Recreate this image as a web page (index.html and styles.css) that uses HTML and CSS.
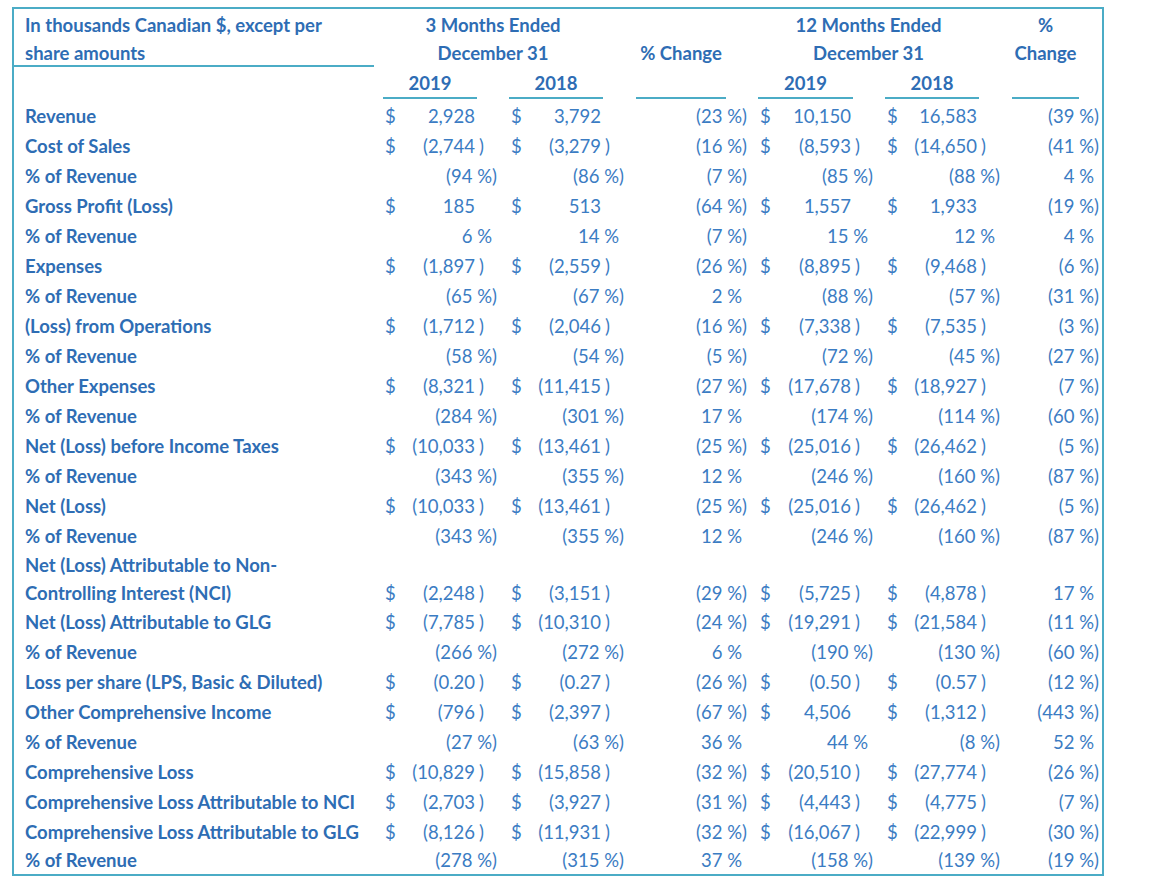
FILE: index.html
```html
<!DOCTYPE html>
<html>
<head>
<meta charset="utf-8">
<link rel="stylesheet" href="styles.css">
</head>
<body>
<div class="frame">
  <div class="head grid">
    <div class="h-label">In thousands Canadian $, except per<br>share amounts</div>
    <div class="h-grp g1">3 Months Ended<br>December 31</div>
    <div class="h-chg1">% Change</div>
    <div class="h-grp g2">12 Months Ended<br>December 31</div>
    <div class="h-chg2">%<br>Change</div>
    <div class="yr a1">2019</div>
    <div class="yr a2">2018</div>
    <div class="yr c6"></div>
    <div class="yr a3">2019</div>
    <div class="yr a4">2018</div>
    <div class="yr c12"></div>
  </div>
  <div class="body">
    <div class="row grid">
      <div class="lbl">Revenue</div>
      <div class="amt a1"><span>$</span><span>2,928</span></div>
      <div class="amt a2"><span>$</span><span>3,792</span></div>
      <div class="pct qc1">(23 %)</div>
      <div class="amt a3"><span>$</span><span>10,150</span></div>
      <div class="amt a4"><span>$</span><span>16,583</span></div>
      <div class="pct qc2">(39 %)</div>
    </div>
    <div class="row grid">
      <div class="lbl">Cost of Sales</div>
      <div class="amt a1"><span>$</span><span>(2,744</span></div><div class="rp r1">)</div>
      <div class="amt a2"><span>$</span><span>(3,279</span></div><div class="rp r2">)</div>
      <div class="pct qc1">(16 %)</div>
      <div class="amt a3"><span>$</span><span>(8,593</span></div><div class="rp r3">)</div>
      <div class="amt a4"><span>$</span><span>(14,650</span></div><div class="rp r4">)</div>
      <div class="pct qc2">(41 %)</div>
    </div>
    <div class="row grid">
      <div class="lbl">% of Revenue</div>
      <div class="pct q1">(94 %)</div>
      <div class="pct q2">(86 %)</div>
      <div class="pct qc1">(7 %)</div>
      <div class="pct q3">(85 %)</div>
      <div class="pct q4">(88 %)</div>
      <div class="pct qc2">4 %<span class="hp">)</span></div>
    </div>
    <div class="row grid">
      <div class="lbl">Gross Profit (Loss)</div>
      <div class="amt a1"><span>$</span><span>185</span></div>
      <div class="amt a2"><span>$</span><span>513</span></div>
      <div class="pct qc1">(64 %)</div>
      <div class="amt a3"><span>$</span><span>1,557</span></div>
      <div class="amt a4"><span>$</span><span>1,933</span></div>
      <div class="pct qc2">(19 %)</div>
    </div>
    <div class="row grid">
      <div class="lbl">% of Revenue</div>
      <div class="pct q1">6 %<span class="hp">)</span></div>
      <div class="pct q2">14 %<span class="hp">)</span></div>
      <div class="pct qc1">(7 %)</div>
      <div class="pct q3">15 %<span class="hp">)</span></div>
      <div class="pct q4">12 %<span class="hp">)</span></div>
      <div class="pct qc2">4 %<span class="hp">)</span></div>
    </div>
    <div class="row grid">
      <div class="lbl">Expenses</div>
      <div class="amt a1"><span>$</span><span>(1,897</span></div><div class="rp r1">)</div>
      <div class="amt a2"><span>$</span><span>(2,559</span></div><div class="rp r2">)</div>
      <div class="pct qc1">(26 %)</div>
      <div class="amt a3"><span>$</span><span>(8,895</span></div><div class="rp r3">)</div>
      <div class="amt a4"><span>$</span><span>(9,468</span></div><div class="rp r4">)</div>
      <div class="pct qc2">(6 %)</div>
    </div>
    <div class="row grid">
      <div class="lbl">% of Revenue</div>
      <div class="pct q1">(65 %)</div>
      <div class="pct q2">(67 %)</div>
      <div class="pct qc1">2 %<span class="hp">)</span></div>
      <div class="pct q3">(88 %)</div>
      <div class="pct q4">(57 %)</div>
      <div class="pct qc2">(31 %)</div>
    </div>
    <div class="row grid">
      <div class="lbl">(Loss) from Operations</div>
      <div class="amt a1"><span>$</span><span>(1,712</span></div><div class="rp r1">)</div>
      <div class="amt a2"><span>$</span><span>(2,046</span></div><div class="rp r2">)</div>
      <div class="pct qc1">(16 %)</div>
      <div class="amt a3"><span>$</span><span>(7,338</span></div><div class="rp r3">)</div>
      <div class="amt a4"><span>$</span><span>(7,535</span></div><div class="rp r4">)</div>
      <div class="pct qc2">(3 %)</div>
    </div>
    <div class="row grid">
      <div class="lbl">% of Revenue</div>
      <div class="pct q1">(58 %)</div>
      <div class="pct q2">(54 %)</div>
      <div class="pct qc1">(5 %)</div>
      <div class="pct q3">(72 %)</div>
      <div class="pct q4">(45 %)</div>
      <div class="pct qc2">(27 %)</div>
    </div>
    <div class="row grid">
      <div class="lbl">Other Expenses</div>
      <div class="amt a1"><span>$</span><span>(8,321</span></div><div class="rp r1">)</div>
      <div class="amt a2"><span>$</span><span>(11,415</span></div><div class="rp r2">)</div>
      <div class="pct qc1">(27 %)</div>
      <div class="amt a3"><span>$</span><span>(17,678</span></div><div class="rp r3">)</div>
      <div class="amt a4"><span>$</span><span>(18,927</span></div><div class="rp r4">)</div>
      <div class="pct qc2">(7 %)</div>
    </div>
    <div class="row grid">
      <div class="lbl">% of Revenue</div>
      <div class="pct q1">(284 %)</div>
      <div class="pct q2">(301 %)</div>
      <div class="pct qc1">17 %<span class="hp">)</span></div>
      <div class="pct q3">(174 %)</div>
      <div class="pct q4">(114 %)</div>
      <div class="pct qc2">(60 %)</div>
    </div>
    <div class="row grid">
      <div class="lbl">Net (Loss) before Income Taxes</div>
      <div class="amt a1"><span>$</span><span>(10,033</span></div><div class="rp r1">)</div>
      <div class="amt a2"><span>$</span><span>(13,461</span></div><div class="rp r2">)</div>
      <div class="pct qc1">(25 %)</div>
      <div class="amt a3"><span>$</span><span>(25,016</span></div><div class="rp r3">)</div>
      <div class="amt a4"><span>$</span><span>(26,462</span></div><div class="rp r4">)</div>
      <div class="pct qc2">(5 %)</div>
    </div>
    <div class="row grid">
      <div class="lbl">% of Revenue</div>
      <div class="pct q1">(343 %)</div>
      <div class="pct q2">(355 %)</div>
      <div class="pct qc1">12 %<span class="hp">)</span></div>
      <div class="pct q3">(246 %)</div>
      <div class="pct q4">(160 %)</div>
      <div class="pct qc2">(87 %)</div>
    </div>
    <div class="row grid">
      <div class="lbl">Net (Loss)</div>
      <div class="amt a1"><span>$</span><span>(10,033</span></div><div class="rp r1">)</div>
      <div class="amt a2"><span>$</span><span>(13,461</span></div><div class="rp r2">)</div>
      <div class="pct qc1">(25 %)</div>
      <div class="amt a3"><span>$</span><span>(25,016</span></div><div class="rp r3">)</div>
      <div class="amt a4"><span>$</span><span>(26,462</span></div><div class="rp r4">)</div>
      <div class="pct qc2">(5 %)</div>
    </div>
    <div class="row grid">
      <div class="lbl">% of Revenue</div>
      <div class="pct q1">(343 %)</div>
      <div class="pct q2">(355 %)</div>
      <div class="pct qc1">12 %<span class="hp">)</span></div>
      <div class="pct q3">(246 %)</div>
      <div class="pct q4">(160 %)</div>
      <div class="pct qc2">(87 %)</div>
    </div>
    <div class="row tall grid">
      <div class="lbl">Net (Loss) Attributable to Non-<br>Controlling Interest (NCI)</div>
      <div class="amt a1"><span>$</span><span>(2,248</span></div><div class="rp r1">)</div>
      <div class="amt a2"><span>$</span><span>(3,151</span></div><div class="rp r2">)</div>
      <div class="pct qc1">(29 %)</div>
      <div class="amt a3"><span>$</span><span>(5,725</span></div><div class="rp r3">)</div>
      <div class="amt a4"><span>$</span><span>(4,878</span></div><div class="rp r4">)</div>
      <div class="pct qc2">17 %<span class="hp">)</span></div>
    </div>
    <div class="row grid">
      <div class="lbl">Net (Loss) Attributable to GLG</div>
      <div class="amt a1"><span>$</span><span>(7,785</span></div><div class="rp r1">)</div>
      <div class="amt a2"><span>$</span><span>(10,310</span></div><div class="rp r2">)</div>
      <div class="pct qc1">(24 %)</div>
      <div class="amt a3"><span>$</span><span>(19,291</span></div><div class="rp r3">)</div>
      <div class="amt a4"><span>$</span><span>(21,584</span></div><div class="rp r4">)</div>
      <div class="pct qc2">(11 %)</div>
    </div>
    <div class="row grid">
      <div class="lbl">% of Revenue</div>
      <div class="pct q1">(266 %)</div>
      <div class="pct q2">(272 %)</div>
      <div class="pct qc1">6 %<span class="hp">)</span></div>
      <div class="pct q3">(190 %)</div>
      <div class="pct q4">(130 %)</div>
      <div class="pct qc2">(60 %)</div>
    </div>
    <div class="row grid">
      <div class="lbl">Loss per share (LPS, Basic &amp; Diluted)</div>
      <div class="amt a1"><span>$</span><span>(0.20</span></div><div class="rp r1">)</div>
      <div class="amt a2"><span>$</span><span>(0.27</span></div><div class="rp r2">)</div>
      <div class="pct qc1">(26 %)</div>
      <div class="amt a3"><span>$</span><span>(0.50</span></div><div class="rp r3">)</div>
      <div class="amt a4"><span>$</span><span>(0.57</span></div><div class="rp r4">)</div>
      <div class="pct qc2">(12 %)</div>
    </div>
    <div class="row grid">
      <div class="lbl">Other Comprehensive Income</div>
      <div class="amt a1"><span>$</span><span>(796</span></div><div class="rp r1">)</div>
      <div class="amt a2"><span>$</span><span>(2,397</span></div><div class="rp r2">)</div>
      <div class="pct qc1">(67 %)</div>
      <div class="amt a3"><span>$</span><span>4,506</span></div>
      <div class="amt a4"><span>$</span><span>(1,312</span></div><div class="rp r4">)</div>
      <div class="pct qc2">(443 %)</div>
    </div>
    <div class="row grid">
      <div class="lbl">% of Revenue</div>
      <div class="pct q1">(27 %)</div>
      <div class="pct q2">(63 %)</div>
      <div class="pct qc1">36 %<span class="hp">)</span></div>
      <div class="pct q3">44 %<span class="hp">)</span></div>
      <div class="pct q4">(8 %)</div>
      <div class="pct qc2">52 %<span class="hp">)</span></div>
    </div>
    <div class="row grid">
      <div class="lbl">Comprehensive Loss</div>
      <div class="amt a1"><span>$</span><span>(10,829</span></div><div class="rp r1">)</div>
      <div class="amt a2"><span>$</span><span>(15,858</span></div><div class="rp r2">)</div>
      <div class="pct qc1">(32 %)</div>
      <div class="amt a3"><span>$</span><span>(20,510</span></div><div class="rp r3">)</div>
      <div class="amt a4"><span>$</span><span>(27,774</span></div><div class="rp r4">)</div>
      <div class="pct qc2">(26 %)</div>
    </div>
    <div class="row grid">
      <div class="lbl">Comprehensive Loss Attributable to NCI</div>
      <div class="amt a1"><span>$</span><span>(2,703</span></div><div class="rp r1">)</div>
      <div class="amt a2"><span>$</span><span>(3,927</span></div><div class="rp r2">)</div>
      <div class="pct qc1">(31 %)</div>
      <div class="amt a3"><span>$</span><span>(4,443</span></div><div class="rp r3">)</div>
      <div class="amt a4"><span>$</span><span>(4,775</span></div><div class="rp r4">)</div>
      <div class="pct qc2">(7 %)</div>
    </div>
    <div class="row grid">
      <div class="lbl">Comprehensive Loss Attributable to GLG</div>
      <div class="amt a1"><span>$</span><span>(8,126</span></div><div class="rp r1">)</div>
      <div class="amt a2"><span>$</span><span>(11,931</span></div><div class="rp r2">)</div>
      <div class="pct qc1">(32 %)</div>
      <div class="amt a3"><span>$</span><span>(16,067</span></div><div class="rp r3">)</div>
      <div class="amt a4"><span>$</span><span>(22,999</span></div><div class="rp r4">)</div>
      <div class="pct qc2">(30 %)</div>
    </div>
    <div class="row last grid">
      <div class="lbl">% of Revenue</div>
      <div class="pct q1">(278 %)</div>
      <div class="pct q2">(315 %)</div>
      <div class="pct qc1">37 %<span class="hp">)</span></div>
      <div class="pct q3">(158 %)</div>
      <div class="pct q4">(139 %)</div>
      <div class="pct qc2">(19 %)</div>
    </div>
  </div>
</div>
</body>
</html>
```

FILE: styles.css
```css
html, body {
  margin: 0;
  padding: 0;
  background: #ffffff;
}

body {
  font-family: "Lato", "Liberation Sans", sans-serif;
  font-size: 18.5px;
  color: #3b7cc3;
}

.frame {
  box-sizing: border-box;
  width: 1092px;
  margin: 7px 0 0 12px;
  border: 2px solid #4bacc6;
}

.grid {
  display: grid;
  grid-template-columns: 369px 94px 32px 94px 33px 90px 32px 95px 32px 94px 33px 67px 23px;
}

/* header */
.head {
  padding-top: 2px;
  grid-template-rows: 28px 28px 32px;
  font-weight: 700;
  color: #2e6db4;
  line-height: 28px;
}

.h-label {
  grid-column: 1;
  grid-row: 1 / 3;
  box-sizing: border-box;
  margin-right: 9px;
  padding-left: 11px;
  border-bottom: 2px solid #4bacc6;
}

.h-grp {
  grid-row: 1 / 3;
  text-align: center;
}
.h-grp.g1 { grid-column: 2 / 5; }
.h-grp.g2 { grid-column: 8 / 11; }

.h-chg1 {
  grid-column: 6;
  grid-row: 2;
  text-align: center;
}

.h-chg2 {
  grid-column: 12;
  grid-row: 1 / 3;
  text-align: center;
}

.yr {
  grid-row: 3;
  box-sizing: border-box;
  padding-top: 3px;
  line-height: 27px;
  text-align: center;
  border-bottom: 2px solid #4bacc6;
}
.c6 { grid-column: 6; }
.c12 { grid-column: 12; }

/* body */
.body {
  padding-top: 2px;
}

.row {
  height: 30px;
  line-height: 30px;
  align-items: center;
}

.row.tall {
  height: 56px;
  line-height: 28px;
  align-items: end;
}

.row.last {
  height: 27px;
  line-height: 27px;
}

.lbl {
  grid-column: 1;
  padding-left: 11px;
  font-weight: 700;
  color: #2e6db4;
  white-space: nowrap;
}

.a1 { grid-column: 2; }
.a2 { grid-column: 4; }
.a3 { grid-column: 8; }
.a4 { grid-column: 10; }

.r1 { grid-column: 3; }
.r2 { grid-column: 5; }
.r3 { grid-column: 9; }
.r4 { grid-column: 11; }

.amt {
  display: flex;
  justify-content: space-between;
  padding: 0 2px;
}

.rp {
  padding-left: 2px;
}

.pct {
  text-align: right;
  padding-right: 12px;
  white-space: nowrap;
}
.q1 { grid-column: 2 / 4; }
.q2 { grid-column: 4 / 6; }
.qc1 { grid-column: 6 / 8; padding-right: 11px; }
.q3 { grid-column: 8 / 10; }
.q4 { grid-column: 10 / 12; }
.qc2 { grid-column: 12 / 14; padding-right: 3px; }

.hp {
  visibility: hidden;
}
```
